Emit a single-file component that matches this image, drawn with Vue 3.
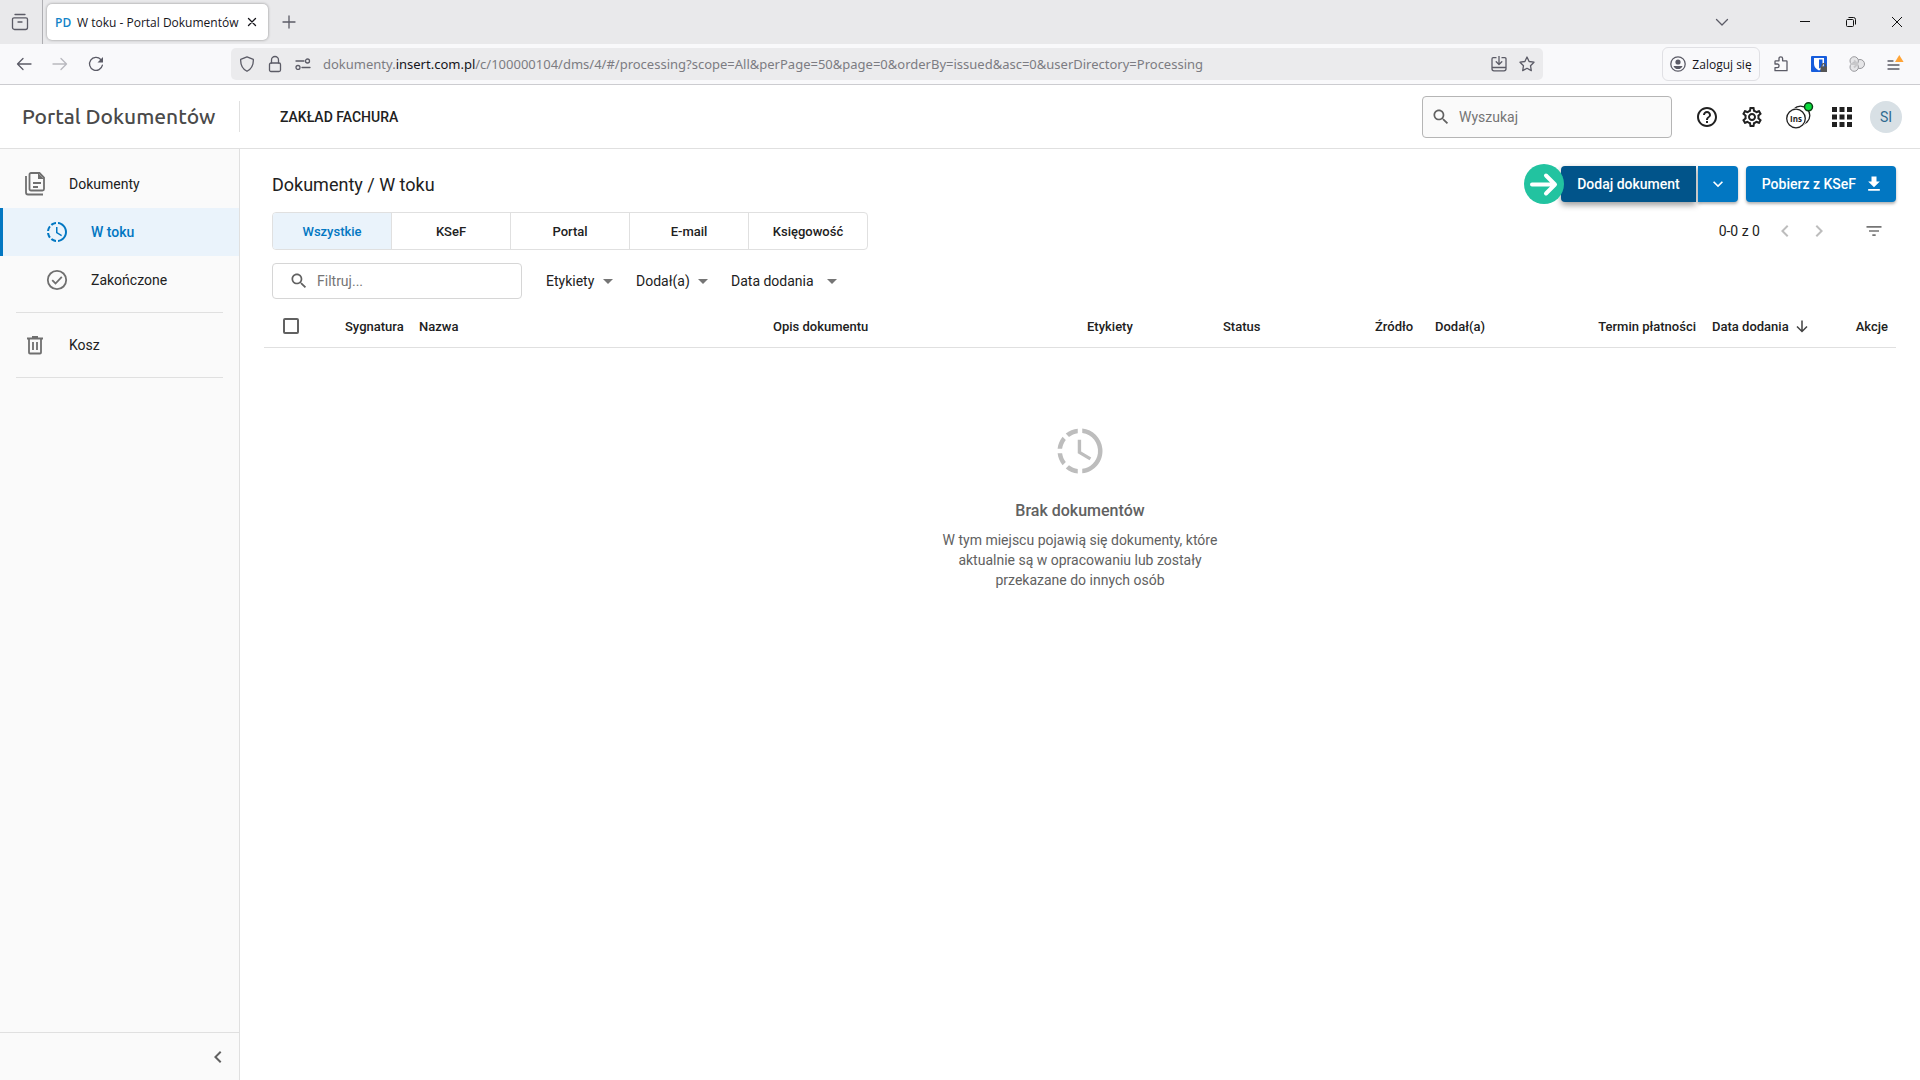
<!-- App.vue -->
<template>
  <div class="window">
    <div class="tabstrip">
      <button class="chrome-btn view-btn" aria-label="Firefox View">
        <svg width="18" height="18" viewBox="0 0 18 18" class="line">
          <path d="M4 1.500h10M3 4.800h12a1.500 1.500 0 0 1 1.500 1.500v8.200a2 2 0 0 1-2 2h-11a2 2 0 0 1-2-2V6.300a1.500 1.500 0 0 1 1.500-1.500zM7 9h4" />
        </svg>
      </button>
      <div class="tab">
        <span class="favicon">PD</span>
        <span class="tab-title">W toku - Portal Dokumentów</span>
        <button class="chrome-btn tab-close" aria-label="Zamknij kartę">
          <svg width="10" height="10" viewBox="0 0 10 10" class="line dark"><path d="M1.500 1.500l7 7M8.500 1.500l-7 7" /></svg>
        </button>
      </div>
      <button class="chrome-btn new-tab" aria-label="Nowa karta">
        <svg width="14" height="14" viewBox="0 0 14 14" class="line"><path d="M7 1v12M1 7h12" /></svg>
      </button>
      <div class="window-controls">
        <button class="chrome-btn tab-list" aria-label="Lista kart">
          <svg width="14" height="8" viewBox="0 0 14 8" class="line"><path d="M1.500 1.500L7 7l5.500-5.500" /></svg>
        </button>
        <button class="chrome-btn control" aria-label="Minimalizuj">
          <svg width="12" height="12" viewBox="0 0 12 12" class="thin"><path d="M1 5.500h10" /></svg>
        </button>
        <button class="chrome-btn control" aria-label="Przywróć">
          <svg width="12" height="12" viewBox="0 0 12 12" class="thin">
            <rect x="1.500" y="3.500" width="7" height="7" rx="1" /><path d="M3.500 1.500h5a2 2 0 0 1 2 2v5" />
          </svg>
        </button>
        <button class="chrome-btn control" aria-label="Zamknij">
          <svg width="12" height="12" viewBox="0 0 12 12" class="thin"><path d="M1 1l10 10M11 1L1 11" /></svg>
        </button>
      </div>
    </div>

    <div class="toolbar">
      <button class="chrome-btn nav-btn" aria-label="Wstecz">
        <svg width="16" height="16" viewBox="0 0 16 16" class="line"><path d="M15 8H1.500M7 2.500L1.500 8 7 13.500" /></svg>
      </button>
      <button class="chrome-btn nav-btn" aria-label="Do przodu" disabled>
        <svg width="16" height="16" viewBox="0 0 16 16" class="line"><path d="M1 8h13.500M9 2.500L14.500 8 9 13.500" /></svg>
      </button>
      <button class="chrome-btn nav-btn" aria-label="Odśwież">
        <svg width="16" height="16" viewBox="0 0 16 16" class="line">
          <path d="M14.400 9.200A6.500 6.500 0 1 1 12.800 3.500" /><path d="M15 1v5.500H9.500z" fill="currentColor" stroke="none" />
        </svg>
      </button>

      <div class="urlbar">
        <svg width="16" height="16" viewBox="0 0 16 16" class="line"><path d="M8 .9l6.300 2.500c.3 5.400-1.600 9.300-6.300 11.900C3.300 12.700 1.400 8.800 1.700 3.400z" /></svg>
        <svg width="16" height="18" viewBox="0 0 16 18" class="line"><rect x="2.500" y="8" width="11" height="8.500" rx="1.500" /><path d="M4.500 8V5a3.500 3.500 0 0 1 7 0v3" /></svg>
        <svg width="16" height="12" viewBox="0 0 16 12" class="line"><path d="M1 3h8M7 9.500h8" /><circle cx="12.500" cy="3" r="2" /><circle cx="3" cy="9.500" r="2" /></svg>
        <div class="url" role="textbox" contenteditable="true" spellcheck="false" aria-label="Adres">dokumenty.<b>insert.com.pl</b>/c/100000104/dms/4/#/processing?scope=All&amp;perPage=50&amp;page=0&amp;orderBy=issued&amp;asc=0&amp;userDirectory=Processing</div>
        <svg width="16" height="16" viewBox="0 0 16 16" class="line"><path d="M5 1.700H2.200A1.200 1.200 0 0 0 1 2.900v9.900A2 2 0 0 0 3 14.800h10a2 2 0 0 0 2-2V2.900a1.200 1.200 0 0 0-1.200-1.200H11M1 11.500h14M8 0v8M5.200 5.700L8 8.500l2.800-2.800" /></svg>
        <svg width="16" height="16" viewBox="0 0 16 16" class="line"><path d="M8 1l2.100 4.500 4.900.7-3.500 3.500.8 4.900L8 12.300l-4.300 2.300.8-4.900L1 6.200l4.900-.7z" /></svg>
      </div>

      <button class="login">
        <svg width="16" height="16" viewBox="0 0 16 16" class="line">
          <circle cx="8" cy="8" r="7.200" /><circle cx="8" cy="6" r="2.600" fill="currentColor" stroke="none" />
          <path d="M3.500 10h9c-.6 1.900-2.300 3.100-4.500 3.100S4.100 11.900 3.500 10z" fill="currentColor" stroke="none" />
        </svg>
        Zaloguj się
      </button>
      <button class="chrome-btn ext" aria-label="Rozszerzenia">
        <svg width="16" height="16" viewBox="0 0 16 16" class="line">
          <path d="M2 8V5.500a.7.7 0 0 1 .7-.7H6V2.600a1.800 1.800 0 0 1 3.600 0v2.200h3.700a.7.700 0 0 1 .7.700v9.200H2v-3h2.200a1.800 1.800 0 0 0 0-3.700z" />
        </svg>
      </button>
      <button class="chrome-btn ext" aria-label="Menedżer haseł">
        <svg width="16" height="16" viewBox="0 0 16 16">
          <rect width="16" height="16" rx="1" fill="#175ddc" />
          <path d="M3 2h10v6c0 3-2 5-5 6.500C5 13 3 11 3 8z" fill="#fff" />
          <path d="M8 3.500h3.500v4.500c0 2-1.300 3.500-3.500 4.600z" fill="#175ddc" />
          <path d="M9.500 10.500H16V16H9.500z" fill="#555" /><path d="M11 11V9.500a1.800 1.800 0 0 1 3.600 0V11" fill="none" stroke="#555" stroke-width="1.300" />
        </svg>
      </button>
      <button class="chrome-btn ext" aria-label="Asystent">
        <svg width="16" height="16" viewBox="0 0 16 16">
          <g fill="#e6e6e8" stroke="#98989c">
            <circle cx="11" cy="8" r="4.500" /><circle cx="5.200" cy="4.900" r="4.200" /><circle cx="5.200" cy="11.100" r="4.200" />
          </g>
          <path d="M2 8h7M5 4.500L8.500 8 5 11.500" fill="none" stroke="#c8c8ca" stroke-width="2" />
        </svg>
      </button>
      <button class="chrome-btn ext" aria-label="Menu">
        <svg width="20" height="18" viewBox="0 0 20 18" class="line">
          <path d="M3 6h5M3 10h11M3 14h11" /><path d="M10 7l4.300-7 4.300 7z" fill="#ffa436" stroke="none" />
        </svg>
      </button>
    </div>

    <header class="app-header">
      <div class="brand">Portal Dokumentów</div>
      <div class="company">ZAKŁAD FACHURA</div>
      <label class="search">
        <svg width="20" height="20" viewBox="0 0 24 24"><path :d="icons.search" /></svg>
        <input type="text" placeholder="Wyszukaj" aria-label="Wyszukaj" />
      </label>
      <button class="icon-btn" aria-label="Pomoc"><svg width="24" height="24" viewBox="0 0 24 24"><path :d="icons.help" /></svg></button>
      <button class="icon-btn" aria-label="Ustawienia"><svg width="24" height="24" viewBox="0 0 24 24"><path :d="icons.settings" /></svg></button>
      <button class="icon-btn" aria-label="InsERT">
        <svg width="34" height="30" viewBox="0 0 34 30">
          <circle cx="20.500" cy="13.500" r="9.300" fill="#fff" stroke="#212121" stroke-width="1.300" />
          <circle cx="16" cy="16.500" r="10.500" fill="#fff" />
          <circle cx="16" cy="16.500" r="9.300" fill="#fff" stroke="#212121" stroke-width="1.300" />
          <text x="16" y="19.500" text-anchor="middle" class="ins">Ins</text>
          <circle cx="28.500" cy="4.800" r="4" fill="#0bdc3c" stroke="#0b3d15" stroke-width="1.500" />
        </svg>
      </button>
      <button class="icon-btn" aria-label="Aplikacje">
        <svg width="20" height="20" viewBox="0 0 20 20"><path d="M0 0h5v5H0zM7.500 0h5v5h-5zM15 0h5v5h-5zM0 7.500h5v5H0zM7.500 7.500h5v5h-5zM15 7.500h5v5h-5zM0 15h5v5H0zM7.500 15h5v5h-5zM15 15h5v5h-5z" /></svg>
      </button>
      <button class="avatar" aria-label="Konto">SI</button>
    </header>

    <div class="body">
      <aside class="sidebar">
        <nav>
          <a href="#" class="item">
            <svg width="24" height="24" viewBox="0 0 24 24" class="outline">
              <path d="M3 4v16.500a2 2 0 0 0 2 2h15M8 1h8.500L21 5.500V17a1.500 1.500 0 0 1-1.500 1.500H8A1.500 1.500 0 0 1 6.500 17V2.500A1.500 1.500 0 0 1 8 1zM10 11h8M10 15h5" />
              <path d="M15 1v6h6z" fill="currentColor" stroke="none" />
            </svg>
            Dokumenty
          </a>
          <a href="#" class="item sub active">
            <svg width="24" height="24" viewBox="0 0 24 24"><path :d="icons.progress" /></svg>
            W toku
          </a>
          <a href="#" class="item sub">
            <svg width="24" height="24" viewBox="0 0 24 24" class="outline"><circle cx="12" cy="12" r="9.200" /><path d="M7.200 12.200l3.300 3.300 6.300-6.700" /></svg>
            Zakończone
          </a>
          <hr />
          <a href="#" class="item">
            <svg width="24" height="24" viewBox="0 0 24 24" class="outline"><path d="M4 5.500h16M9 4h6M6 6v13.500a1 1 0 0 0 1 1h10a1 1 0 0 0 1-1V6M10 9v8M14 9v8" /></svg>
            Kosz
          </a>
          <hr />
        </nav>
        <div class="collapse">
          <button class="icon-btn" aria-label="Zwiń menu"><svg width="24" height="24" viewBox="0 0 24 24"><path :d="icons.left" /></svg></button>
        </div>
      </aside>

      <main class="content">
        <div class="row heading">
          <h1>Dokumenty / W toku</h1>
          <div class="actions">
            <div class="split">
              <span class="pointer">
                <svg width="40" height="40" viewBox="0 0 40 40"><circle cx="20" cy="20" r="20" /><path d="M8 20.500h22M22 11.500l9 9-9 9" /></svg>
              </span>
              <button class="primary dark">Dodaj dokument</button>
              <button class="primary more" aria-label="Więcej opcji">
                <svg width="20" height="20" viewBox="0 0 24 24"><path :d="icons.down" /></svg>
              </button>
            </div>
            <button class="primary download">
              Pobierz z KSeF
              <svg width="20" height="20" viewBox="0 0 24 24"><path d="M19 9h-4V3H9v6H5l7 7 7-7zM5 18v2h14v-2H5z" /></svg>
            </button>
          </div>
        </div>

        <div class="row scopes-row">
          <div class="scopes">
            <button v-for="scope in scopes" :key="scope" :class="{ active: scope === activeScope }" @click="activeScope = scope">{{ scope }}</button>
          </div>
          <div class="paginator">
            <span>0-0 z 0</span>
            <button class="icon-btn" aria-label="Poprzednia" disabled><svg width="24" height="24" viewBox="0 0 24 24"><path :d="icons.left" /></svg></button>
            <button class="icon-btn" aria-label="Następna" disabled><svg width="24" height="24" viewBox="0 0 24 24"><path :d="icons.right" /></svg></button>
            <button class="icon-btn columns" aria-label="Filtry"><svg width="20" height="20" viewBox="0 0 24 24"><path d="M10 18h4v-2h-4v2zM3 6v2h18V6H3zm3 7h12v-2H6v2z" /></svg></button>
          </div>
        </div>

        <div class="row filters">
          <label class="filter">
            <svg width="20" height="20" viewBox="0 0 24 24"><path :d="icons.search" /></svg>
            <input type="text" placeholder="Filtruj..." aria-label="Filtruj" />
          </label>
          <label v-for="f in filters" :key="f" class="dropdown">
            <select :aria-label="f"><option>{{ f }}</option></select>
            <svg width="10" height="5" viewBox="0 0 10 5"><path d="M0 0h10L5 5z" /></svg>
          </label>
        </div>

        <table>
          <thead>
            <tr>
              <th class="c-check"><input type="checkbox" aria-label="Zaznacz wszystkie" /></th>
              <th class="c-sign">Sygnatura</th>
              <th class="c-name">Nazwa</th>
              <th>Opis dokumentu</th>
              <th class="c-tags">Etykiety</th>
              <th class="c-status">Status</th>
              <th class="c-source">Źródło</th>
              <th class="c-author">Dodał(a)</th>
              <th class="c-due">Termin płatności</th>
              <th class="c-date">
                <span class="sorted">Data dodania
                  <svg width="14" height="14" viewBox="0 0 14 14"><path d="M7 1.500v11M2 7.500l5 5 5-5" /></svg>
                </span>
              </th>
              <th class="c-actions">Akcje</th>
            </tr>
          </thead>
        </table>

        <section class="empty">
          <svg width="54" height="54" viewBox="0 0 24 24"><path :d="icons.progress" /></svg>
          <h2>Brak dokumentów</h2>
          <p>W tym miejscu pojawią się dokumenty, które aktualnie są w opracowaniu lub zostały przekazane do innych osób</p>
        </section>
      </main>
    </div>
  </div>
</template>

<script setup>
import { ref } from 'vue';

const scopes = ['Wszystkie', 'KSeF', 'Portal', 'E-mail', 'Księgowość'];
const activeScope = ref('Wszystkie');
const filters = ['Etykiety', 'Dodał(a)', 'Data dodania'];

const icons = {
  search: 'M15.5 14h-.79l-.28-.27C15.41 12.59 16 11.11 16 9.5 16 5.91 13.09 3 9.5 3S3 5.91 3 9.5 5.91 16 9.5 16c1.61 0 3.09-.59 4.23-1.57l.27.28v.79l5 4.99L20.49 19l-4.99-5zm-6 0C7.01 14 5 11.99 5 9.5S7.01 5 9.5 5 14 7.01 14 9.5 11.99 14 9.5 14z',
  help: 'M11 18h2v-2h-2v2zm1-16C6.48 2 2 6.48 2 12s4.48 10 10 10 10-4.48 10-10S17.52 2 12 2zm0 18c-4.41 0-8-3.59-8-8s3.59-8 8-8 8 3.59 8 8-3.59 8-8 8zm0-14c-2.21 0-4 1.79-4 4h2c0-1.1.9-2 2-2s2 .9 2 2c0 2-3 1.75-3 5h2c0-2.25 3-2.5 3-5 0-2.21-1.79-4-4-4z',
  settings: 'M19.43 12.98c.04-.32.07-.64.07-.98s-.03-.66-.07-.98l2.11-1.65c.19-.15.24-.42.12-.64l-2-3.46c-.09-.16-.26-.25-.44-.25-.06 0-.12.01-.17.03l-2.49 1c-.52-.4-1.08-.73-1.69-.98l-.38-2.65C14.46 2.18 14.25 2 14 2h-4c-.25 0-.46.18-.49.42l-.38 2.65c-.61.25-1.17.59-1.69.98l-2.49-1c-.06-.02-.12-.03-.18-.03-.17 0-.34.09-.43.25l-2 3.46c-.13.22-.07.49.12.64l2.11 1.65c-.04.32-.07.65-.07.98s.03.66.07.98l-2.11 1.65c-.19.15-.24.42-.12.64l2 3.46c.09.16.26.25.44.25.06 0 .12-.01.17-.03l2.49-1c.52.4 1.08.73 1.69.98l.38 2.65c.03.24.24.42.49.42h4c.25 0 .46-.18.49-.42l.38-2.65c.61-.25 1.17-.59 1.69-.98l2.49 1c.06.02.12.03.18.03.17 0 .34-.09.43-.25l2-3.46c.12-.22.07-.49-.12-.64l-2.11-1.65zm-1.98-1.71c.04.31.05.52.05.73 0 .21-.02.43-.05.73l-.14 1.13.89.7 1.08.84-.7 1.21-1.27-.51-1.04-.42-.9.68c-.43.32-.84.56-1.25.73l-1.06.43-.16 1.13-.2 1.35h-1.4l-.19-1.35-.16-1.13-1.06-.43c-.43-.18-.83-.41-1.23-.71l-.91-.7-1.06.43-1.27.51-.7-1.21 1.08-.84.89-.7-.14-1.13c-.03-.31-.05-.54-.05-.74s.02-.43.05-.73l.14-1.13-.89-.7-1.08-.84.7-1.21 1.27.51 1.04.42.9-.68c.43-.32.84-.56 1.25-.73l1.06-.43.16-1.13.2-1.35h1.39l.19 1.35.16 1.13 1.06.43c.43.18.83.41 1.23.71l.91.7 1.06-.43 1.27-.51.7 1.21-1.07.85-.89.7.14 1.13zM12 8c-2.21 0-4 1.79-4 4s1.79 4 4 4 4-1.79 4-4-1.79-4-4-4zm0 6c-1.1 0-2-.9-2-2s.9-2 2-2 2 .9 2 2-.9 2-2 2z',
  progress: 'M13 2.03v2.02C17.39 4.59 20.5 8.58 19.96 12.97 19.5 16.61 16.64 19.5 13 19.93v2C18.5 21.38 22.5 16.5 21.95 11 21.5 6.25 17.73 2.5 13 2.03M11 2.06C9.05 2.25 7.19 3 5.67 4.26L7.1 5.74C8.22 4.84 9.57 4.26 11 4.06v-2M4.26 5.67C3 7.19 2.25 9.04 2.05 11h2C4.24 9.58 4.8 8.23 5.69 7.1L4.26 5.67M2.06 13C2.26 14.96 3.03 16.81 4.27 18.33L5.69 16.9C4.81 15.77 4.24 14.42 4.06 13h-2M7.1 18.37L5.67 19.74C7.18 21 9.04 21.79 11 22v-2C9.58 19.82 8.23 19.25 7.1 18.37M12.5 7v5.25L17 14.92 16.25 16.15 11 13V7h1.5z',
  left: 'M15.41 7.41L14 6l-6 6 6 6 1.410-1.410L10.830 12z',
  right: 'M8.590 16.590L10 18l6-6-6-6-1.410 1.410L13.170 12z',
  down: 'M7.410 8.590L12 13.170l4.590-4.580L18 10l-6 6-6-6z'
};
</script>

<style>
body {
  margin: 0;
}
</style>

<style scoped>
* {
  box-sizing: border-box;
}
.window {
  min-height: 100vh;
  display: flex;
  flex-direction: column;
  font-family: Roboto, sans-serif;
  font-size: 14px;
  color: #212121;
  background: #fff;
}
button, input, select {
  font: inherit;
  color: inherit;
}
button {
  display: flex;
  align-items: center;
  justify-content: center;
  padding: 0;
  border: 0;
  background: none;
  white-space: nowrap;
}
svg {
  display: block;
  flex: none;
  fill: currentColor;
}
.line {
  fill: none;
  stroke: currentColor;
  stroke-width: 1.3;
  stroke-linecap: round;
  stroke-linejoin: round;
}
.thin {
  fill: none;
  stroke: #111;
}

/* browser chrome */
.tabstrip {
  height: 44px;
  display: flex;
  align-items: center;
  background: #e9e9eb;
  font-family: "Open Sans", sans-serif;
  font-size: 12px;
}
.chrome-btn {
  height: 32px;
  color: #5b5b66;
}
.dark {
  color: #15141a;
}
.view-btn {
  width: 43px;
  height: 44px;
  padding-right: 2px;
  border-right: 1px solid #aeaeb2;
}
.tab {
  width: 221px;
  height: 36px;
  margin-left: 4px;
  padding: 0 8px;
  display: flex;
  align-items: center;
  border-radius: 5px;
  background: #fff;
  box-shadow: 0 0 3px rgba(0, 0, 0, 0.4);
  color: #15141a;
}
.favicon {
  width: 22px;
  font-weight: 600;
  color: #1283c8;
}
.tab-title {
  flex: 1;
  white-space: nowrap;
}
.tab-close {
  width: 16px;
}
.new-tab {
  width: 42px;
}
.window-controls {
  margin-left: auto;
  display: flex;
}
.tab-list {
  width: 46px;
  margin-right: 37px;
}
.control {
  width: 46px;
}
.toolbar {
  height: 41px;
  padding: 0 6px;
  display: flex;
  align-items: center;
  background: #f9f9fb;
  border-bottom: 1px solid #ccccd0;
}
.nav-btn {
  width: 36px;
}
.nav-btn:disabled {
  opacity: 0.4;
}
.urlbar {
  flex: 1;
  min-width: 0;
  height: 32px;
  margin: 0 119px 0 117px;
  padding: 0 8px;
  display: flex;
  align-items: center;
  gap: 12px;
  border-radius: 5px;
  background: #ebebed;
  color: #5b5b66;
}
.url {
  flex: 1;
  min-width: 0;
  overflow: hidden;
  white-space: nowrap;
  font-family: "Noto Sans", sans-serif;
  font-size: 13px;
  color: #7c7c82;
}
.url b {
  font-weight: 400;
  color: #15141a;
}
.login {
  width: 98px;
  height: 34px;
  margin-right: 2px;
  gap: 6px;
  border: 1px solid #e0e0e4;
  border-radius: 6px;
  font-family: "Open Sans", sans-serif;
  font-size: 12px;
  color: #15141a;
}
.login svg {
  color: #5b5b66;
}
.ext {
  width: 38px;
}

/* application header */
.app-header {
  height: 64px;
  padding-right: 18px;
  display: flex;
  align-items: center;
  border-bottom: 1px solid #e0e0e0;
}
.brand {
  width: 240px;
  padding-left: 22px;
  border-right: 1px solid #e0e0e0;
  font-family: Ubuntu, "Open Sans", sans-serif;
  font-size: 21px;
  font-weight: 500;
  line-height: 31px;
  color: #4a4a4a;
  white-space: nowrap;
}
.company {
  margin-left: 40px;
  font-weight: 500;
}
.search {
  width: 250px;
  height: 42px;
  margin: 0 12px 0 auto;
  padding: 0 8px;
  display: flex;
  align-items: center;
  gap: 8px;
  border: 1px solid #b5b5b5;
  border-radius: 4px;
  background: #fafafa;
  color: #616161;
}
.search input, .filter input {
  flex: 1;
  min-width: 0;
  padding: 0;
  border: 0;
  outline: 0;
  background: none;
}
input::placeholder {
  color: #757575;
  opacity: 1;
}
.icon-btn {
  width: 45px;
  height: 32px;
}
.ins {
  font: 700 8px "Open Sans", sans-serif;
}
.avatar {
  width: 32px;
  height: 32px;
  margin-left: 6px;
  border-radius: 50%;
  background: #d8e0e5;
  color: #2f6a8f;
}

/* sidebar */
.body {
  flex: 1;
  display: flex;
}
.sidebar {
  width: 240px;
  padding-top: 11px;
  display: flex;
  flex-direction: column;
  justify-content: space-between;
  background: #fafafa;
  border-right: 1px solid #e0e0e0;
}
.item {
  height: 48px;
  padding-left: 20px;
  display: flex;
  align-items: center;
  gap: 22px;
  border-left: 3px solid transparent;
  color: #212121;
  font-size: 14px;
  text-decoration: none;
}
.item svg {
  color: #6f6f6f;
}
.item.sub {
  padding-left: 42px;
}
.item.active {
  border-left-color: #0277c2;
  background: #eaf3fb;
  color: #0277c2;
  font-weight: 500;
}
.item.active svg {
  color: inherit;
}
.outline {
  fill: none;
  stroke: currentColor;
  stroke-width: 1.8;
}
hr {
  margin: 8px 16px;
  border: 0;
  border-top: 1px solid #e0e0e0;
}
.collapse {
  height: 48px;
  display: flex;
  align-items: center;
  justify-content: flex-end;
  border-top: 1px solid #e0e0e0;
  color: #616161;
}
.collapse .icon-btn {
  width: 42px;
}

/* document list */
.content {
  flex: 1;
  min-width: 0;
  padding: 17px 24px 0;
}
.row {
  margin-left: 8px;
  display: flex;
  align-items: center;
}
h1 {
  margin: 0;
  font-size: 18px;
  font-weight: 400;
}
.heading {
  height: 36px;
  justify-content: space-between;
}
.actions {
  display: flex;
  gap: 8px;
}
.split {
  position: relative;
  display: flex;
  gap: 2px;
}
.pointer {
  position: absolute;
  top: -2px;
  left: -37px;
}
.pointer circle {
  fill: #22c3a0;
}
.pointer path {
  fill: none;
  stroke: #fff;
  stroke-width: 4;
  stroke-linecap: round;
  stroke-linejoin: round;
}
.primary {
  height: 36px;
  padding: 0 16px;
  gap: 8px;
  border-radius: 4px;
  background: #0277c2;
  box-shadow: 0 2px 3px rgba(0, 0, 0, 0.3);
  color: #fff;
  font-weight: 500;
}
.primary.dark {
  border-radius: 4px 0 0 4px;
  background: #01548a;
  box-shadow: 0 3px 6px rgba(0, 0, 0, 0.4);
  color: #fff;
}
.primary.more {
  width: 40px;
  padding: 0;
  border-radius: 0 4px 4px 0;
}
.primary.download {
  padding-right: 12px;
}
.scopes-row {
  margin-top: 10px;
  justify-content: space-between;
}
.scopes {
  width: 596px;
  height: 38px;
  display: flex;
  border: 1px solid #e0e0e0;
  border-radius: 4px;
  overflow: hidden;
}
.scopes button {
  flex: 1;
  font-size: 13px;
  font-weight: 500;
}
.scopes button + button {
  border-left: 1px solid #e0e0e0;
}
.scopes .active {
  background: #eaf3fb;
  color: #0277c2;
}
.paginator {
  display: flex;
  align-items: center;
}
.paginator span {
  margin-right: 8px;
}
.paginator .icon-btn {
  width: 34px;
  color: #757575;
}
.paginator .icon-btn:disabled {
  color: #bdbdbd;
}
.paginator .columns {
  width: 44px;
  margin-left: 16px;
}
.filters {
  margin-top: 13px;
}
.filter {
  width: 250px;
  height: 36px;
  margin-right: 24px;
  padding: 0 16px;
  display: flex;
  align-items: center;
  gap: 8px;
  border: 1px solid #d6d6d6;
  border-radius: 4px;
  color: #616161;
}
.dropdown {
  margin-right: 23px;
  display: flex;
  align-items: center;
  gap: 8px;
}
.dropdown svg {
  color: #757575;
}
.dropdown:last-child {
  gap: 13px;
}
.dropdown select {
  appearance: none;
  padding: 0;
  border: 0;
  background: none;
}
table {
  width: 100%;
  table-layout: fixed;
  border-collapse: collapse;
}
th {
  height: 48px;
  padding: 7px 8px 0;
  border-bottom: 1px solid #e0e0e0;
  font-size: 13px;
  font-weight: 500;
  text-align: left;
  white-space: nowrap;
}
.c-check { width: 73px; padding-left: 19px; }
.c-sign { width: 74px; }
.c-name { width: 354px; }
.c-tags { width: 136px; }
.c-status { width: 152px; }
.c-source { width: 60px; }
.c-author { width: 156px; }
.c-due { width: 121px; text-align: right; }
.c-date { width: 143px; }
.c-actions { width: 49px; text-align: right; }
th input {
  appearance: none;
  display: block;
  width: 16px;
  height: 16px;
  margin: 0;
  border: 2px solid #616161;
  border-radius: 2px;
}
.sorted {
  display: flex;
  align-items: center;
  gap: 6px;
}
.sorted svg {
  fill: none;
  stroke: #424242;
  stroke-width: 1.5;
}
.empty {
  padding-top: 76px;
  display: flex;
  flex-direction: column;
  align-items: center;
  color: #616161;
  text-align: center;
}
.empty svg {
  color: #bdbdbd;
}
h2 {
  margin: 23px 0 9px;
  font-size: 16px;
  font-weight: 500;
  line-height: 20px;
}
.empty p {
  max-width: 300px;
  margin: 0;
  line-height: 20px;
}
</style>
